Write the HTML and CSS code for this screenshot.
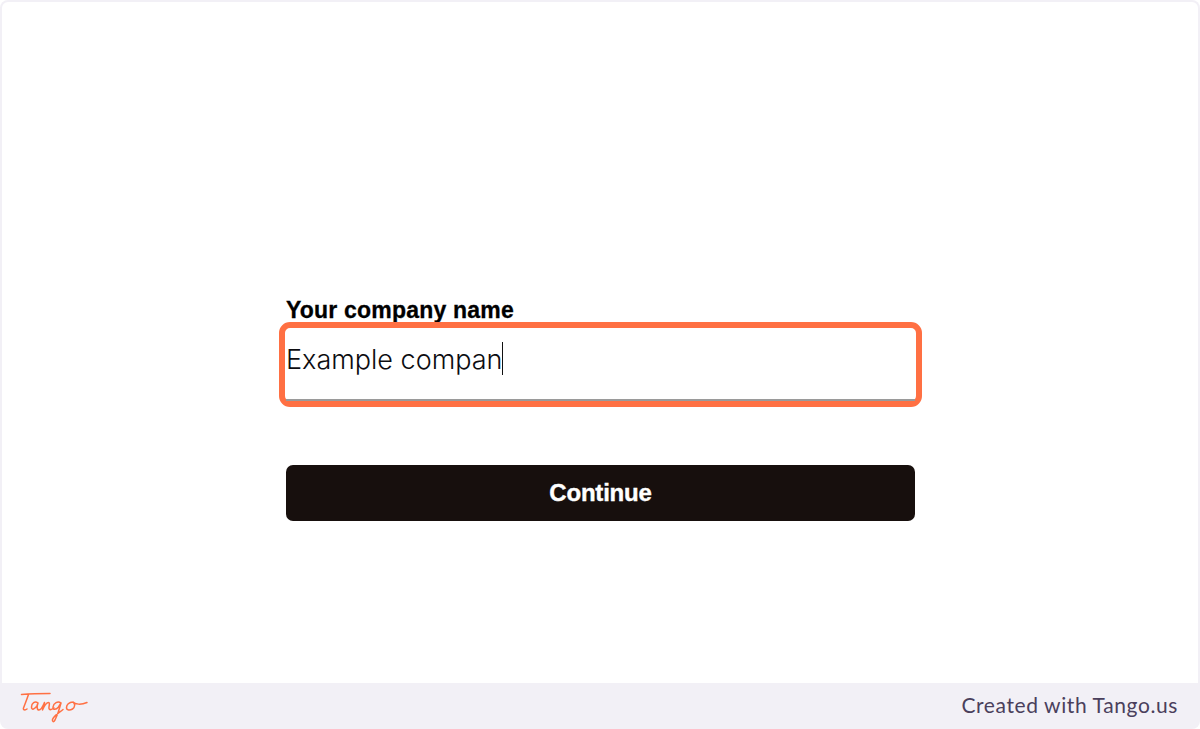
FILE: index.html
```html
<!DOCTYPE html>
<html lang="en">

<head>
    <meta charset="UTF-8">
    <title>Your company name</title>
    <link rel="stylesheet" href="styles.css">
</head>

<body>
    <div class="frame">
        <main class="content">
            <form class="company-form">
                <label class="field-label">Your company name</label>
                <div class="field-highlight">
                    <div class="field-input">
                        <span class="field-value">Example compan</span><span class="caret"></span>
                    </div>
                </div>
                <button type="button" class="continue-btn">Continue</button>
            </form>
        </main>

        <!-- Footer strip -->
        <footer class="footer">
            <svg class="logo" width="70" height="34" viewBox="0 0 70 34" role="img" aria-label="Tango">
                <path d="M1.500 4.500C10 3.800 20 3.500 30 3.500M8.500 4.500C7 9 5 14 3.500 18C2.800 20 5 20.500 7 19" />
                <path d="M18 13C15 10.500 11.500 13 11.500 17C11.500 20.500 15 19.500 17 15.500L18 13C17 16 16.500 20 19 20C21 20 23 16 24.500 12.500C24 15 23 17.500 22.500 20C24 16.500 26 12.500 28.500 12.500C30.500 12.500 28.500 17 29 18.500C29.500 20.500 32 19.500 34 18" />
                <path d="M41 13C38 10.500 33.500 13 33 17C32.700 20 36 20 38.500 17L41 13C39.500 19 37.500 25 35 30C33.500 32.500 32 32 32.500 29.500C33.500 26 38 23.500 43 19.500" />
                <path d="M53 12C49 12 46.500 15 46.500 17.500C46.500 20.500 50 20.500 52.500 19C55 17.500 55.500 13.500 53 12C55 14.500 61 15 67 12.500" />
            </svg>
            <span class="credit">Created with Tango.us</span>
        </footer>
    </div>
</body>

</html>
```

FILE: styles.css
```css
html,
body {
    margin: 0;
    height: 100%;
}

body {
    background: #ffffff;
    font-family: "Liberation Sans", Arial, sans-serif;
}

.frame {
    height: 729px;
    box-sizing: border-box;
    display: flex;
    flex-direction: column;
    padding: 2px 2px 0;
    background: #f2f0f6;
    border-radius: 8px;
}

.content {
    flex: 1;
    display: flex;
    justify-content: center;
    padding-top: 295px;
    background: #ffffff;
    border-radius: 6px 6px 0 0;
}

.company-form {
    width: 629px;
    margin-left: 1px;
    display: flex;
    flex-direction: column;
}

.field-label {
    height: 26px;
    font-size: 23px;
    line-height: 26px;
    font-weight: 700;
    color: #000000;
    letter-spacing: 0.2px;
    -webkit-text-stroke: 0.3px #000000;
}

.field-highlight {
    margin: -1px -7px 0;
    height: 85px;
    box-sizing: border-box;
    padding: 0 1px 0;
    border: 6px solid #ff7043;
    border-radius: 11px;
}

.field-input {
    height: 100%;
    box-sizing: border-box;
    padding-top: 16px;
    border-bottom: 2px solid #9a9a9a;
    display: flex;
    align-items: flex-start;
}

.field-value {
    font-family: Inter, "Liberation Sans", sans-serif;
    font-size: 27px;
    line-height: 32px;
    color: #0c0c10;
    font-weight: 300;
}

.caret {
    width: 1px;
    height: 33px;
    margin: -2px 0 0 -1px;
    background: #111111;
}

.continue-btn {
    margin-top: 58px;
    height: 56px;
    padding: 0;
    border: none;
    border-radius: 7px;
    background: #170f0d;
    color: #ffffff;
    font-family: "Liberation Sans", Arial, sans-serif;
    font-size: 24px;
    font-weight: 700;
    letter-spacing: -0.2px;
    -webkit-text-stroke: 0.4px #ffffff;
    cursor: pointer;
}

.footer {
    height: 46px;
    flex-shrink: 0;
    display: flex;
    align-items: center;
    justify-content: space-between;
    padding: 0 20px 0 18px;
}

.logo {
    margin-top: 2px;
    fill: none;
    stroke: #ff7043;
    stroke-width: 1.5;
    stroke-linecap: round;
    stroke-linejoin: round;
}

.credit {
    margin-top: -3px;
    font-family: Lato, "Open Sans", sans-serif;
    font-size: 21px;
    letter-spacing: 0.6px;
    color: #4a3f5c;
}
```
